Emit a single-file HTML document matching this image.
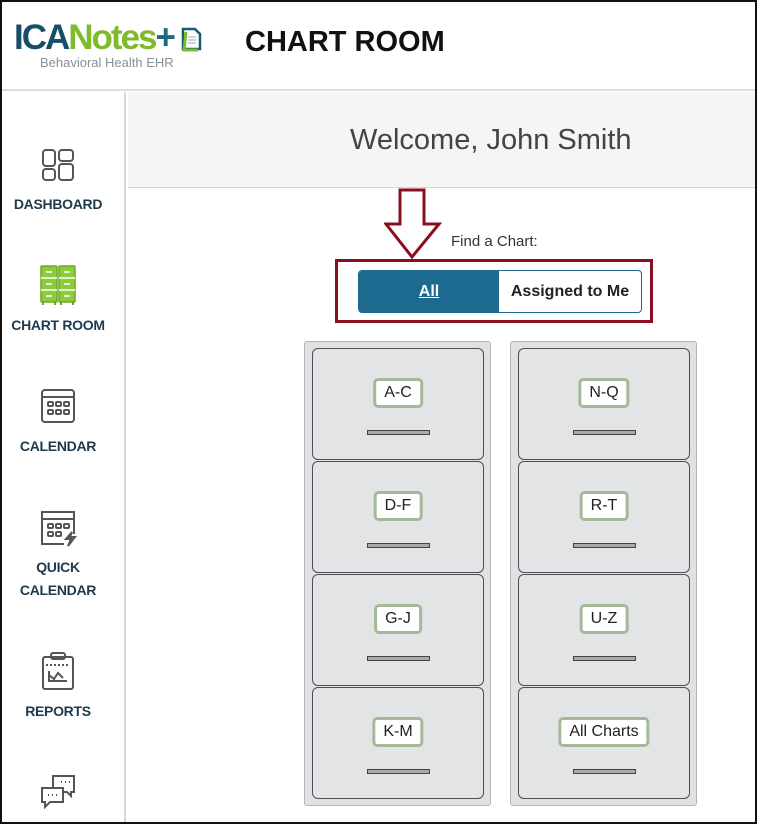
<!DOCTYPE html>
<html><head><meta charset="utf-8"><style>
*{margin:0;padding:0;box-sizing:border-box}
body{width:757px;height:824px;overflow:hidden;background:#fff;font-family:"Liberation Sans",sans-serif;position:relative}
.frame{position:absolute;left:0;top:0;width:757px;height:824px;border:2px solid #111;z-index:10;pointer-events:none}
.hdr{position:absolute;left:0;top:0;width:757px;height:91px;border-bottom:2px solid #ddd}
.logo{position:absolute;left:14px;top:18px;font-size:35px;font-weight:bold;letter-spacing:-2px}
.sub{position:absolute;left:40px;top:55px;font-size:13px;color:#8a8f96}
.title{position:absolute;left:245px;top:26px;font-size:29px;font-weight:bold;color:#111}
.side{position:absolute;left:0;top:92px;width:126px;height:732px;border-right:2px solid #d8d8d8}
.nav{position:absolute;width:116px;text-align:center;font-size:14px;font-weight:bold;color:#1f3a4d;letter-spacing:-0.3px}
.nav svg{display:block;margin:0 auto 6px}
.band{position:absolute;left:128px;top:92px;width:629px;height:96px;background:#f5f5f6;border-bottom:1px solid #d4d4d4}
.band div{position:absolute;left:222px;top:32px;font-size:29px;color:#444}
.find{position:absolute;left:451px;top:233px;font-size:15px;color:#333}
.redbox{position:absolute;left:335px;top:259px;width:318px;height:64px;border:3px solid #8a0f1e}
.tog{position:absolute;left:358px;top:270px;width:284px;height:43px;border:1px solid #1c6a90;border-radius:4px;overflow:hidden;display:flex;font-size:16px}
.tog .a{width:140px;background:#1c6a90;color:#fff;text-align:center;line-height:42px;text-decoration:underline;font-weight:bold}
.tog .b{flex:1;text-align:center;line-height:42px;color:#222;font-weight:bold}
.cab{position:absolute;top:341px;width:187px;height:465px;background:#dfe1e3;border:1px solid #b4b7ba;border-radius:3px}
.dr{position:absolute;left:7px;width:172px;height:112px;border:1.5px solid #4d4f52;border-radius:6px;background:#e2e4e6}
.lab{position:absolute;left:50%;top:29px;transform:translateX(-50%);background:#fff;border:3px solid #a5b99a;border-radius:5px;padding:0 8px;height:30px;line-height:24px;font-size:16px;color:#222;white-space:nowrap}
.hd{position:absolute;left:54px;top:81px;width:63px;height:5px;border:1.5px solid #444;background:#aaa}
</style></head><body>
<div class="frame"></div>
<div class="hdr">
<div class="logo"><span style="color:#1a4d6a">ICA</span><span style="color:#7dbb2b">Notes</span><span style="color:#1a6a80">+</span></div>
<svg style="position:absolute;left:180px;top:26px" width="22" height="26"><path d="M3 3h12l5 5v15H3z" fill="#fff" stroke="#1a5a70" stroke-width="2.5"/><path d="M6 6l-2 18h14" fill="none" stroke="#7dbb2b" stroke-width="3"/><path d="M8 11h8M8 14h8M8 17h8" stroke="#9ab" stroke-width="1"/></svg>
<div class="sub">Behavioral Health EHR</div>
<div class="title">CHART ROOM</div>
</div>
<div class="side">
<div class="nav" style="left:0;top:56px"><svg width="34" height="34" viewBox="0 0 34 34" fill="none" stroke="#555" stroke-width="2" style="margin-bottom:14px"><rect x="2" y="2" width="12" height="16" rx="3"/><rect x="2" y="21" width="12" height="11" rx="3"/><rect x="18" y="2" width="14" height="11" rx="3"/><rect x="18" y="16" width="14" height="16" rx="3"/></svg>DASHBOARD</div>
<div class="nav" style="left:0;top:172px"><svg width="38" height="42" viewBox="0 0 38 42" fill="#8ccc3a" stroke="#6aa824" stroke-width="1.5" style="margin-bottom:11px"><rect x="2" y="2" width="16" height="36" rx="1"/><rect x="20" y="2" width="16" height="36" rx="1"/><path d="M2 14h16M2 26h16M20 14h16M20 26h16M7 8h6M7 20h6M7 32h6M25 8h6M25 20h6M25 32h6" stroke="#fff"/><path d="M4 38v3M16 38v3M22 38v3M34 38v3" stroke="#6aa824" stroke-width="2"/></svg>CHART ROOM</div>
<div class="nav" style="left:0;top:294px"><svg width="40" height="40" viewBox="0 0 40 40" fill="none" stroke="#555" stroke-width="2" style="margin-bottom:12px"><rect x="4" y="4" width="32" height="32" rx="3"/><path d="M4 11h32"/><rect x="10" y="16" width="5" height="4" rx="1"/><rect x="18" y="16" width="5" height="4" rx="1"/><rect x="26" y="16" width="5" height="4" rx="1"/><rect x="10" y="24" width="5" height="4" rx="1"/><rect x="18" y="24" width="5" height="4" rx="1"/><rect x="26" y="24" width="5" height="4" rx="1"/></svg>CALENDAR</div>
<div class="nav" style="left:0;top:416px;line-height:23px"><svg width="40" height="40" viewBox="0 0 40 40" fill="none" stroke="#555" stroke-width="2" style="margin-bottom:8px"><path d="M26 36H4V4h32v22"/><path d="M4 11h32"/><rect x="10" y="16" width="5" height="4" rx="1"/><rect x="18" y="16" width="5" height="4" rx="1"/><rect x="26" y="16" width="5" height="4" rx="1"/><rect x="10" y="24" width="5" height="4" rx="1"/><rect x="18" y="24" width="5" height="4" rx="1"/><path d="M34 24l-6 7h5l-3 7 7-9h-5z"/></svg>QUICK<br>CALENDAR</div>
<div class="nav" style="left:0;top:558px"><svg width="40" height="42" viewBox="0 0 40 42" fill="none" stroke="#555" stroke-width="2" style="margin-bottom:11px"><rect x="5" y="7" width="30" height="32" rx="2"/><rect x="13" y="3" width="14" height="6" rx="2"/><path d="M8 15h24" stroke-dasharray="2 2"/><path d="M11 21v10h18M11 25l5 4 4-6 5 5"/></svg>REPORTS</div>
<div class="nav" style="left:0;top:680px"><svg width="40" height="40" viewBox="0 0 40 40" fill="none" stroke="#555" stroke-width="2"><path d="M15 4h21v16h-3v4l-4-4H15z"/><path d="M4 16h21v14H12l-5 5v-5H4z" fill="#fff"/><path d="M23 10h1M27 10h1M31 10h1M10 23h1M14 23h1M18 23h1"/></svg></div>
</div>
<div class="band"><div>Welcome, John Smith</div></div>
<svg style="position:absolute;left:384px;top:188px" width="58" height="72"><path d="M16 2h24v34h15L28 69 2 36h14z" fill="#fff" stroke="#8a0f1e" stroke-width="3"/></svg>
<div class="find">Find a Chart:</div>
<div class="redbox"></div>
<div class="tog"><div class="a">All</div><div class="b">Assigned to Me</div></div>
<div class="cab" style="left:304px">
<div class="dr" style="top:6px"><div class="lab">A-C</div><div class="hd"></div></div>
<div class="dr" style="top:119px"><div class="lab">D-F</div><div class="hd"></div></div>
<div class="dr" style="top:232px"><div class="lab">G-J</div><div class="hd"></div></div>
<div class="dr" style="top:345px"><div class="lab">K-M</div><div class="hd"></div></div>
</div>
<div class="cab" style="left:510px">
<div class="dr" style="top:6px"><div class="lab">N-Q</div><div class="hd"></div></div>
<div class="dr" style="top:119px"><div class="lab">R-T</div><div class="hd"></div></div>
<div class="dr" style="top:232px"><div class="lab">U-Z</div><div class="hd"></div></div>
<div class="dr" style="top:345px"><div class="lab">All Charts</div><div class="hd"></div></div>
</div>
</body></html>
